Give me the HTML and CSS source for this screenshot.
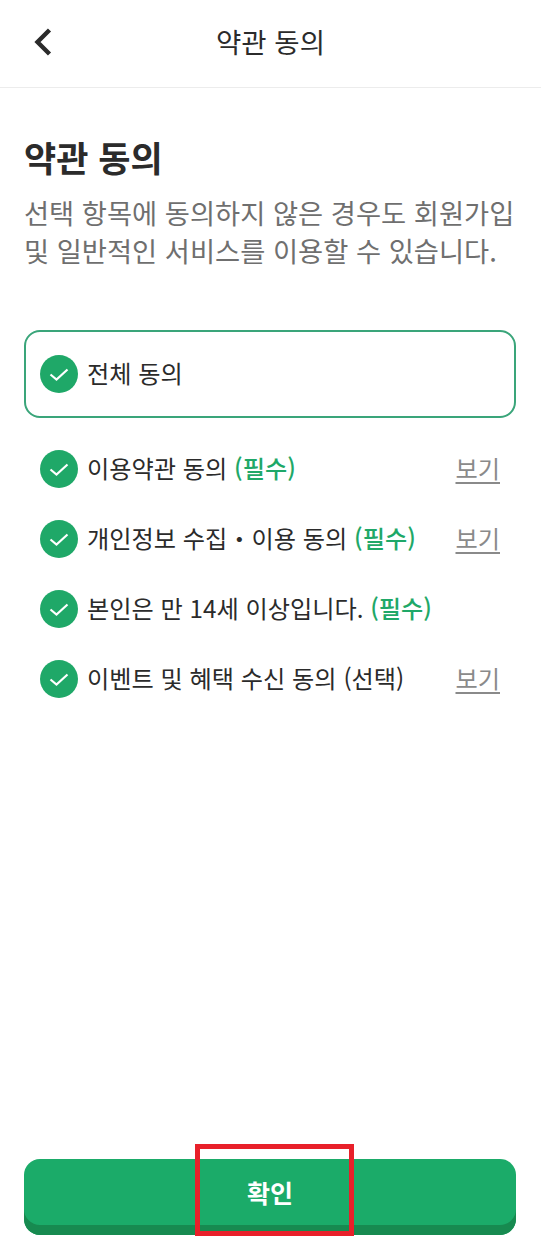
FILE: index.html
```html
<!DOCTYPE html>
<html lang="ko">
<head>
    <meta charset="utf-8">
    <meta name="viewport" content="width=device-width, initial-scale=1.0">
    <title>약관 동의</title>
    <link rel="stylesheet" href="styles.css">
</head>
<body>
    <div class="page">
        <header class="topbar">
            <svg class="back" width="20" height="28" viewBox="0 0 20 28"><path d="M16.5 2 L4.5 14 L16.5 26" fill="none" stroke="#2b2b2b" stroke-width="4.4"/></svg>
            <span class="topbar-title">약관 동의</span>
        </header>
        <main class="content">
            <h1>약관 동의</h1>
            <p class="desc">선택 항목에 동의하지 않은 경우도 회원가입<br>및 일반적인 서비스를 이용할 수 있습니다.</p>
            <div class="all-box">
                <svg class="check" viewBox="0 0 38 38"><circle cx="19" cy="19" r="19" fill="#1fa868"/><path d="M10.5 19.5 L16.5 24.5 L27.5 14.5" fill="none" stroke="#fff" stroke-width="2.2"/></svg>
                <span>전체 동의</span>
            </div>
            <ul class="terms">
                <li>
                    <svg class="check" viewBox="0 0 38 38"><circle cx="19" cy="19" r="19" fill="#1fa868"/><path d="M10.5 19.5 L16.5 24.5 L27.5 14.5" fill="none" stroke="#fff" stroke-width="2.2"/></svg>
                    <span class="label">이용약관 동의 <b>(필수)</b></span>
                    <a class="view">보기</a>
                </li>
                <li>
                    <svg class="check" viewBox="0 0 38 38"><circle cx="19" cy="19" r="19" fill="#1fa868"/><path d="M10.5 19.5 L16.5 24.5 L27.5 14.5" fill="none" stroke="#fff" stroke-width="2.2"/></svg>
                    <span class="label">개인정보 수집・이용 동의 <b>(필수)</b></span>
                    <a class="view">보기</a>
                </li>
                <li>
                    <svg class="check" viewBox="0 0 38 38"><circle cx="19" cy="19" r="19" fill="#1fa868"/><path d="M10.5 19.5 L16.5 24.5 L27.5 14.5" fill="none" stroke="#fff" stroke-width="2.2"/></svg>
                    <span class="label">본인은 만 14세 이상입니다. <b>(필수)</b></span>
                </li>
                <li>
                    <svg class="check" viewBox="0 0 38 38"><circle cx="19" cy="19" r="19" fill="#1fa868"/><path d="M10.5 19.5 L16.5 24.5 L27.5 14.5" fill="none" stroke="#fff" stroke-width="2.2"/></svg>
                    <span class="label">이벤트 및 혜택 수신 동의 (선택)</span>
                    <a class="view">보기</a>
                </li>
            </ul>
        </main>
        <footer class="bottom">
            <button class="confirm">확인</button>
        </footer>
        <div class="highlight"></div>
    </div>
</body>
</html>
```

FILE: styles.css
```css
* {
    box-sizing: border-box;
}

html, body {
    margin: 0;
    padding: 0;
    background: #fff;
}

body {
    font-family: "Noto Sans CJK KR", "Noto Sans", sans-serif;
    color: #2b2b2b;
}

.page {
    position: relative;
    width: 541px;
    height: 1254px;
    display: flex;
    flex-direction: column;
    overflow: hidden;
}

.topbar {
    position: relative;
    height: 88px;
    flex: none;
    display: flex;
    align-items: center;
    justify-content: center;
    border-bottom: 1px solid #ececec;
}

.back {
    position: absolute;
    left: 33px;
    top: 28px;
}

.topbar-title {
    font-size: 27.5px;
    line-height: 1;
    margin-top: -4px;
}

.content {
    flex: 1;
    padding: 47px 25px 0 24px;
}

h1 {
    margin: 0;
    font-size: 35px;
    line-height: 44px;
    font-weight: 700;
}

.desc {
    margin: 14px 0 0;
    font-size: 27.3px;
    line-height: 38px;
    color: #6f6f6f;
    white-space: nowrap;
}

.all-box {
    display: flex;
    align-items: center;
    gap: 9px;
    height: 88px;
    margin-top: 61px;
    padding: 0 14px;
    border: 2px solid #3aa57a;
    border-radius: 16px;
    font-size: 24.2px;
}

.all-box span {
    margin-top: -4px;
}

.check {
    width: 38px;
    height: 38px;
    flex: none;
}

.terms {
    list-style: none;
    margin: 16px 0 0;
    padding: 0 16px;
}

.terms li {
    display: flex;
    align-items: center;
    gap: 9px;
    height: 70px;
    font-size: 24.2px;
}

.label {
    flex: 1;
    margin-top: -4px;
    white-space: nowrap;
}

.label b {
    color: #1fa868;
    font-weight: 500;
}

.view {
    margin-top: -4px;
    font-size: 24.2px;
    color: #8a8a8a;
    text-decoration: underline;
    text-underline-offset: 4px;
}

.bottom {
    flex: none;
    padding: 0 25px 19px 24px;
}

.confirm {
    display: block;
    width: 100%;
    height: 76px;
    padding: 0 0 10px;
    border: none;
    border-radius: 16px;
    background: #1bab69;
    box-shadow: inset 0 -10px 0 #178a50;
    color: #fff;
    font-family: inherit;
    font-size: 25px;
    font-weight: 700;
}

.highlight {
    position: absolute;
    left: 195px;
    top: 1144px;
    width: 159px;
    height: 92px;
    border: 5px solid #e8202a;
}
```
